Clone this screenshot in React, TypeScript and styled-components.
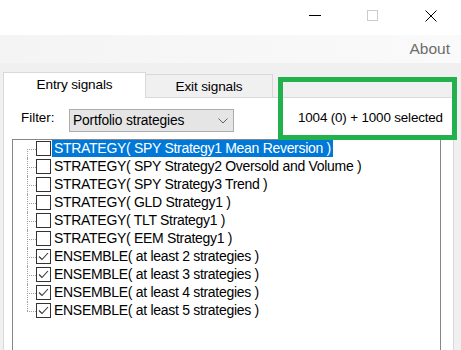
import React from 'react';
import styled, { createGlobalStyle } from 'styled-components';

const GlobalStyle = createGlobalStyle`
  body {
    margin: 0;
    background: #f0f0f0;
    font-family: "Liberation Sans", Arial, sans-serif;
  }
`;

const Window = styled.div`
  position: relative;
  width: 461px;
  height: 350px;
  overflow: hidden;
  display: flex;
  flex-direction: column;
  background: #f0f0f0;
`;

const TitleBar = styled.div`
  flex: none;
  height: 35px;
  background: #fff;
  display: flex;
  justify-content: flex-end;
  align-items: flex-start;
  padding-right: 1px;
`;

const CaptionButton = styled.div`
  width: 58px;
  height: 32px;
  display: flex;
  align-items: center;
  justify-content: center;
`;

const MenuBar = styled.div`
  flex: none;
  height: 28px;
  display: flex;
  align-items: center;
  justify-content: flex-end;
  padding-right: 11px;
  background: linear-gradient(to right, #f4f4f4, #fafafa);
`;

const MenuItem = styled.span`
  font-size: 15.5px;
  color: #6d6d6d;
`;

const Body = styled.div`
  flex: 1;
  display: flex;
  flex-direction: column;
  padding: 9px 0 0 3px;
`;

const TabStrip = styled.div`
  display: flex;
  align-items: flex-end;
  height: 25px;
`;

const Tab = styled.div<{ $active: boolean; $width: number }>`
  box-sizing: border-box;
  width: ${({ $width }) => $width}px;
  height: ${({ $active }) => ($active ? 26 : 23)}px;
  margin-bottom: ${({ $active }) => ($active ? -1 : 0)}px;
  position: relative;
  z-index: ${({ $active }) => ($active ? 1 : 0)};
  border: 1px solid #d9d9d9;
  border-bottom: none;
  border-left: ${({ $active }) => ($active ? '1px solid #d9d9d9' : 'none')};
  background: ${({ $active }) => ($active ? '#fff' : '#f0f0f0')};
  display: flex;
  align-items: center;
  justify-content: center;
  padding-bottom: ${({ $active }) => ($active ? 2 : 0)}px;
  font-size: 13.6px;
  letter-spacing: -0.15px;
  color: #000;
`;

const Panel = styled.div`
  box-sizing: border-box;
  width: 451px;
  flex: 1;
  border: 1px solid #d9d9d9;
  background: #fff;
  padding: 11px 0 0 8px;
`;

const FilterRow = styled.div`
  display: flex;
  align-items: center;
  height: 23px;
`;

const FilterLabel = styled.span`
  width: 48px;
  margin-left: 9px;
  padding-bottom: 6px;
  font-size: 13.4px;
`;

const Combo = styled.div`
  box-sizing: border-box;
  width: 165px;
  height: 23px;
  border: 1px solid #adadad;
  background: #e5e5e5;
  display: flex;
  align-items: center;
  padding: 0 5px 0 3px;
  font-size: 13.8px;
  letter-spacing: -0.15px;
`;

const ComboText = styled.span`
  flex: 1;
`;

const CountLabel = styled.span`
  margin-left: 64px;
  padding-bottom: 6px;
  font-size: 13.4px;
  letter-spacing: -0.15px;
`;

const Tree = styled.div`
  box-sizing: border-box;
  width: 429px;
  height: 230px;
  margin-top: 7px;
  border: 1px solid #828790;
  background: #fff;
`;

const TreeRow = styled.div`
  display: flex;
  align-items: flex-start;
  height: 18px;
`;

const Connector = styled.div<{ $first: boolean; $last: boolean }>`
  position: relative;
  width: 23px;
  height: 18px;
  flex: none;

  &::before {
    content: '';
    position: absolute;
    left: 14px;
    top: ${({ $first }) => ($first ? 9 : 0)}px;
    bottom: ${({ $last }) => ($last ? 9 : 0)}px;
    border-left: 1px dotted #a0a0a0;
  }

  &::after {
    content: '';
    position: absolute;
    left: 14px;
    top: 9px;
    width: 9px;
    border-top: 1px dotted #a0a0a0;
  }
`;

const CheckBox = styled.div`
  box-sizing: border-box;
  flex: none;
  width: 15px;
  height: 15px;
  margin-top: 1px;
  border: 1px solid #333;
  background: #fff;
  display: flex;
  align-items: center;
  justify-content: center;
`;

const ItemLabel = styled.span<{ $selected: boolean }>`
  margin-left: 1px;
  height: 17px;
  line-height: 17px;
  padding: 0 2px;
  font-size: 14px;
  letter-spacing: -0.3px;
  white-space: nowrap;
  background: ${({ $selected }) => ($selected ? '#0078d7' : 'transparent')};
  color: ${({ $selected }) => ($selected ? '#fff' : '#000')};
`;

const Highlight = styled.div`
  position: absolute;
  left: 278px;
  top: 77px;
  width: 179px;
  height: 63px;
  box-sizing: border-box;
  border: 5px solid #22b14c;
  pointer-events: none;
`;

const items = [
  { text: 'STRATEGY( SPY Strategy1 Mean Reversion )', checked: false },
  { text: 'STRATEGY( SPY Strategy2 Oversold and Volume )', checked: false },
  { text: 'STRATEGY( SPY Strategy3 Trend )', checked: false },
  { text: 'STRATEGY( GLD Strategy1 )', checked: false },
  { text: 'STRATEGY( TLT Strategy1 )', checked: false },
  { text: 'STRATEGY( EEM Strategy1 )', checked: false },
  { text: 'ENSEMBLE( at least 2 strategies )', checked: true },
  { text: 'ENSEMBLE( at least 3 strategies )', checked: true },
  { text: 'ENSEMBLE( at least 4 strategies )', checked: true },
  { text: 'ENSEMBLE( at least 5 strategies )', checked: true },
];

const App = () => {
  return (
    <Window>
      <GlobalStyle />
      <TitleBar>
        <CaptionButton>
          <svg width="12" height="12" viewBox="0 0 12 12">
            <line x1="0" y1="5.5" x2="12" y2="5.5" stroke="#000" strokeWidth="1" />
          </svg>
        </CaptionButton>
        <CaptionButton>
          <svg width="12" height="12" viewBox="0 0 12 12">
            <rect x="0.5" y="0.5" width="10" height="10" fill="none" stroke="#cccccc" strokeWidth="1" />
          </svg>
        </CaptionButton>
        <CaptionButton>
          <svg width="12" height="12" viewBox="0 0 12 12">
            <path d="M0.5 0.5 L11.5 11.5 M11.5 0.5 L0.5 11.5" stroke="#000" strokeWidth="1" />
          </svg>
        </CaptionButton>
      </TitleBar>
      <MenuBar>
        <MenuItem>About</MenuItem>
      </MenuBar>
      <Body>
        <TabStrip>
          <Tab $active={true} $width={143}>Entry signals</Tab>
          <Tab $active={false} $width={127}>Exit signals</Tab>
        </TabStrip>
        <Panel>
          <FilterRow>
            <FilterLabel>Filter:</FilterLabel>
            <Combo>
              <ComboText>Portfolio strategies</ComboText>
              <svg width="10" height="6" viewBox="0 0 10 6">
                <path d="M0.5 0.5 L5 5 L9.5 0.5" fill="none" stroke="#606060" strokeWidth="1" />
              </svg>
            </Combo>
            <CountLabel>1004 (0) + 1000 selected</CountLabel>
          </FilterRow>
          <Tree>
            {items.map((item, i) => (
              <TreeRow key={item.text}>
                <Connector $first={i === 0} $last={i === items.length - 1} />
                <CheckBox>
                  {item.checked && (
                    <svg width="11" height="11" viewBox="0 0 11 11">
                      <path d="M1 5.5 L4 8.5 L10 2" fill="none" stroke="#333" strokeWidth="1.1" />
                    </svg>
                  )}
                </CheckBox>
                <ItemLabel $selected={i === 0}>{item.text}</ItemLabel>
              </TreeRow>
            ))}
          </Tree>
        </Panel>
      </Body>
      <Highlight />
    </Window>
  );
};

export default App;
